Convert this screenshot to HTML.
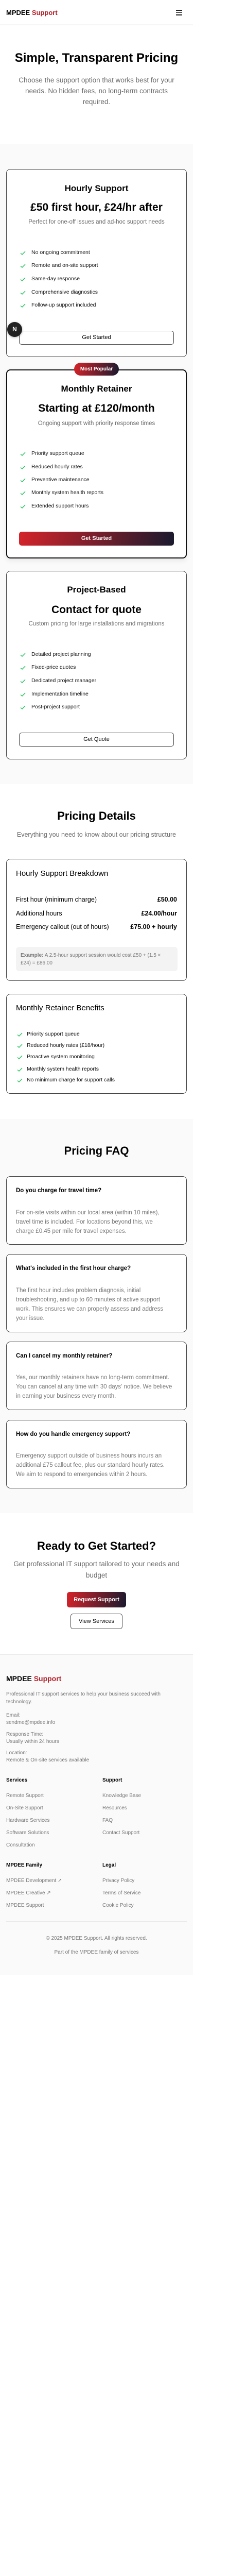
<!DOCTYPE html>
<html style="height:5202px;overflow:hidden"><head><meta charset="utf-8"><style>
*{margin:0;padding:0;box-sizing:border-box}
html,body{width:480px;height:5202px;overflow:hidden}
body{background:#fff;position:relative;font-family:"Liberation Sans",Arial,sans-serif;color:#000}
.a{position:absolute}
.c{position:absolute;left:0;width:375px;text-align:center;white-space:nowrap}
.g{color:#6b6b6b}
.card{position:absolute;left:12px;width:351px;background:#fff;border:1px solid #444;border-radius:8px}
.feat{position:absolute;left:61px;font-size:10.5px;line-height:14px;color:#111;white-space:nowrap}
.ck{position:absolute;left:39px;width:11px;height:8px}
.btn{position:absolute;left:37px;width:301px;height:27px;border:1px solid #444;border-radius:5px;text-align:center;font-size:11px;line-height:25px;background:#fff}
.grad{background:linear-gradient(100deg,#d4232a,#1a1a2e);color:#fff;border:none;font-weight:bold}
.faq{position:absolute;left:12px;width:351px;background:#fff;border:1px solid #444;border-radius:8px}
.q{position:absolute;left:31px;font-size:11.5px;font-weight:bold;white-space:nowrap;line-height:16px}
.ans{position:absolute;left:31px;font-size:11.5px;color:#777;line-height:18px;white-space:nowrap}
.fl{position:absolute;font-size:10px;color:#777;white-space:nowrap;line-height:14px}
.fh{position:absolute;font-size:10px;font-weight:bold;white-space:nowrap;line-height:14px}
</style></head><body>
<svg width="0" height="0" style="position:absolute;left:0;top:0"><defs><symbol id="ck" viewBox="0 0 11 8"><path d="M1 4.5 L4 7 L10 1" fill="none" stroke="#22c55e" stroke-width="1.4"/></symbol></defs></svg>

<div class="a" style="left:12px;top:17px;font-size:13px;font-weight:bold;line-height:16px">MPDEE <span style="color:#b3202a">Support</span></div>
<div class="a" style="left:342px;top:19px;width:12px;height:1.5px;background:#222"></div>
<div class="a" style="left:342px;top:23.5px;width:12px;height:1.5px;background:#222"></div>
<div class="a" style="left:342px;top:28px;width:12px;height:1.5px;background:#222"></div>
<div class="a" style="left:0;top:48px;width:375px;height:1px;background:#555"></div>

<div class="c" style="top:98px;font-size:24px;font-weight:bold;line-height:30px">Simple, Transparent Pricing</div>
<div class="c g" style="top:145px;font-size:13.5px;line-height:21px">Choose the support option that works best for your<br>needs. No hidden fees, no long-term contracts<br>required.</div>

<div class="a" style="left:0;top:280px;width:375px;height:1242px;background:#fafafa"></div>

<div class="card" style="top:328px;height:365px"></div>
<div class="c" style="top:355px;font-size:17px;font-weight:bold;line-height:22px">Hourly Support</div>
<div class="c" style="top:390px;font-size:21px;font-weight:bold;line-height:26px">£50 first hour, £24/hr after</div>
<div class="c g" style="top:423px;font-size:11.5px;line-height:16px">Perfect for one-off issues and ad-hoc support needs</div>
<svg class="ck" style="top:487px"><use href="#ck"/></svg><div class="feat" style="top:483px">No ongoing commitment</div>
<svg class="ck" style="top:512px"><use href="#ck"/></svg><div class="feat" style="top:508px">Remote and on-site support</div>
<svg class="ck" style="top:538px"><use href="#ck"/></svg><div class="feat" style="top:534px">Same-day response</div>
<svg class="ck" style="top:564px"><use href="#ck"/></svg><div class="feat" style="top:560px">Comprehensive diagnostics</div>
<svg class="ck" style="top:589px"><use href="#ck"/></svg><div class="feat" style="top:585px">Follow-up support included</div>
<div class="btn" style="top:642px">Get Started</div>
<div class="a" style="left:14px;top:625px;width:29px;height:29px;border-radius:50%;background:#222;box-shadow:0 1px 4px rgba(0,0,0,.3);color:#fff;font-size:12px;font-weight:bold;text-align:center;line-height:29px">N</div>

<div class="card" style="top:717px;height:367px;border:2px solid #111;box-shadow:0 4px 10px rgba(0,0,0,.08)"></div>
<div class="a" style="left:144px;top:704px;width:87px;height:25px;border-radius:13px;background:linear-gradient(100deg,#d4232a,#1a1a2e);color:#fff;font-size:10px;font-weight:bold;text-align:center;line-height:25px">Most Popular</div>
<div class="c" style="top:744px;font-size:17px;font-weight:bold;line-height:22px">Monthly Retainer</div>
<div class="c" style="top:780px;font-size:21px;font-weight:bold;line-height:26px">Starting at £120/month</div>
<div class="c g" style="top:814px;font-size:11.5px;line-height:16px">Ongoing support with priority response times</div>
<svg class="ck" style="top:877px"><use href="#ck"/></svg><div class="feat" style="top:873px">Priority support queue</div>
<svg class="ck" style="top:903px"><use href="#ck"/></svg><div class="feat" style="top:899px">Reduced hourly rates</div>
<svg class="ck" style="top:928px"><use href="#ck"/></svg><div class="feat" style="top:924px">Preventive maintenance</div>
<svg class="ck" style="top:953px"><use href="#ck"/></svg><div class="feat" style="top:949px">Monthly system health reports</div>
<svg class="ck" style="top:979px"><use href="#ck"/></svg><div class="feat" style="top:975px">Extended support hours</div>
<div class="btn grad" style="top:1032px;line-height:27px">Get Started</div>

<div class="card" style="top:1108px;height:366px"></div>
<div class="c" style="top:1134px;font-size:17px;font-weight:bold;line-height:22px">Project-Based</div>
<div class="c" style="top:1171px;font-size:21px;font-weight:bold;line-height:26px">Contact for quote</div>
<div class="c g" style="top:1203px;font-size:11.5px;line-height:16px">Custom pricing for large installations and migrations</div>
<svg class="ck" style="top:1267px"><use href="#ck"/></svg><div class="feat" style="top:1263px">Detailed project planning</div>
<svg class="ck" style="top:1292px"><use href="#ck"/></svg><div class="feat" style="top:1288px">Fixed-price quotes</div>
<svg class="ck" style="top:1318px"><use href="#ck"/></svg><div class="feat" style="top:1314px">Dedicated project manager</div>
<svg class="ck" style="top:1344px"><use href="#ck"/></svg><div class="feat" style="top:1340px">Implementation timeline</div>
<svg class="ck" style="top:1369px"><use href="#ck"/></svg><div class="feat" style="top:1365px">Post-project support</div>
<div class="btn" style="top:1422px">Get Quote</div>

<div class="c" style="top:1570px;font-size:22px;font-weight:bold;line-height:28px">Pricing Details</div>
<div class="c g" style="top:1611px;font-size:12.5px;line-height:18px">Everything you need to know about our pricing structure</div>

<div class="card" style="top:1667px;height:237px"></div>
<div class="a" style="left:31px;top:1686px;font-size:15px;line-height:20px">Hourly Support Breakdown</div>
<div class="a" style="left:31px;top:1737px;font-size:12.5px;line-height:18px">First hour (minimum charge)</div>
<div class="a" style="right:136px;top:1737px;font-size:12.5px;font-weight:bold;line-height:18px;text-align:right">£50.00</div>
<div class="a" style="left:31px;top:1764px;font-size:12.5px;line-height:18px">Additional hours</div>
<div class="a" style="right:136px;top:1764px;font-size:12.5px;font-weight:bold;line-height:18px">£24.00/hour</div>
<div class="a" style="left:31px;top:1790px;font-size:12.5px;line-height:18px">Emergency callout (out of hours)</div>
<div class="a" style="right:136px;top:1790px;font-size:12.5px;font-weight:bold;line-height:18px">£75.00 + hourly</div>
<div class="a" style="left:31px;top:1838px;width:314px;height:47px;background:#f3f3f3;border-radius:6px"></div>
<div class="a" style="left:40px;top:1847px;font-size:10px;line-height:15px;color:#777;white-space:nowrap"><b>Example:</b> A 2.5-hour support session would cost £50 + (1.5 ×<br>£24) = £86.00</div>

<div class="card" style="top:1929px;height:194px"></div>
<div class="a" style="left:31px;top:1947px;font-size:15px;line-height:20px">Monthly Retainer Benefits</div>
<svg class="ck" style="left:33px;top:2004px"><use href="#ck"/></svg><div class="feat" style="left:52px;top:2000px">Priority support queue</div>
<svg class="ck" style="left:33px;top:2026px"><use href="#ck"/></svg><div class="feat" style="left:52px;top:2022px">Reduced hourly rates (£18/hour)</div>
<svg class="ck" style="left:33px;top:2048px"><use href="#ck"/></svg><div class="feat" style="left:52px;top:2044px">Proactive system monitoring</div>
<svg class="ck" style="left:33px;top:2072px"><use href="#ck"/></svg><div class="feat" style="left:52px;top:2068px">Monthly system health reports</div>
<svg class="ck" style="left:33px;top:2093px"><use href="#ck"/></svg><div class="feat" style="left:52px;top:2089px">No minimum charge for support calls</div>

<div class="a" style="left:0;top:2172px;width:375px;height:765px;background:#fafafa"></div>
<div class="c" style="top:2220px;font-size:22px;font-weight:bold;line-height:28px">Pricing FAQ</div>

<div class="faq" style="top:2283px;height:133px"></div>
<div class="q" style="top:2303px">Do you charge for travel time?</div>
<div class="ans" style="top:2345px">For on-site visits within our local area (within 10 miles),<br>travel time is included. For locations beyond this, we<br>charge £0.45 per mile for travel expenses.</div>

<div class="faq" style="top:2434px;height:152px"></div>
<div class="q" style="top:2454px">What's included in the first hour charge?</div>
<div class="ans" style="top:2496px">The first hour includes problem diagnosis, initial<br>troubleshooting, and up to 60 minutes of active support<br>work. This ensures we can properly assess and address<br>your issue.</div>

<div class="faq" style="top:2604px;height:133px"></div>
<div class="q" style="top:2624px">Can I cancel my monthly retainer?</div>
<div class="ans" style="top:2665px">Yes, our monthly retainers have no long-term commitment.<br>You can cancel at any time with 30 days' notice. We believe<br>in earning your business every month.</div>

<div class="faq" style="top:2756px;height:133px"></div>
<div class="q" style="top:2776px">How do you handle emergency support?</div>
<div class="ans" style="top:2817px">Emergency support outside of business hours incurs an<br>additional £75 callout fee, plus our standard hourly rates.<br>We aim to respond to emergencies within 2 hours.</div>

<div class="c" style="top:2987px;font-size:22px;font-weight:bold;line-height:28px">Ready to Get Started?</div>
<div class="c g" style="top:3025px;font-size:13.5px;line-height:22px">Get professional IT support tailored to your needs and<br>budget</div>
<div class="a" style="left:130px;top:3090px;width:115px;height:30px;border-radius:5px;background:linear-gradient(100deg,#d4232a,#1a1a2e);color:#fff;font-size:11px;font-weight:bold;text-align:center;line-height:30px">Request Support</div>
<div class="a" style="left:137px;top:3132px;width:101px;height:30px;border-radius:5px;border:1px solid #444;font-size:11px;text-align:center;line-height:28px">View Services</div>

<div class="a" style="left:0;top:3210px;width:375px;height:623px;background:#fafafa;border-top:1px solid #888"></div>
<div class="a" style="left:12px;top:3249px;font-size:14px;font-weight:bold;line-height:18px">MPDEE <span style="color:#b3202a">Support</span></div>
<div class="fl" style="left:12px;top:3281px;line-height:15px">Professional IT support services to help your business succeed with<br>technology.</div>
<div class="fl" style="left:12px;top:3323px">Email:<br>sendme@mpdee.info</div>
<div class="fl" style="left:12px;top:3360px">Response Time:<br>Usually within 24 hours</div>
<div class="fl" style="left:12px;top:3396px">Location:<br>Remote &amp; On-site services available</div>
<div class="fh" style="left:12px;top:3449px">Services</div>
<div class="fh" style="left:199px;top:3449px">Support</div>
<div class="fl" style="left:12px;top:3479px">Remote Support</div>
<div class="fl" style="left:12px;top:3503px">On-Site Support</div>
<div class="fl" style="left:12px;top:3527px">Hardware Services</div>
<div class="fl" style="left:12px;top:3551px">Software Solutions</div>
<div class="fl" style="left:12px;top:3575px">Consultation</div>
<div class="fl" style="left:199px;top:3479px">Knowledge Base</div>
<div class="fl" style="left:199px;top:3503px">Resources</div>
<div class="fl" style="left:199px;top:3527px">FAQ</div>
<div class="fl" style="left:199px;top:3551px">Contact Support</div>
<div class="fh" style="left:12px;top:3614px">MPDEE Family</div>
<div class="fh" style="left:199px;top:3614px">Legal</div>
<div class="fl" style="left:12px;top:3644px">MPDEE Development ↗</div>
<div class="fl" style="left:12px;top:3668px">MPDEE Creative ↗</div>
<div class="fl" style="left:12px;top:3692px">MPDEE Support</div>
<div class="fl" style="left:199px;top:3644px">Privacy Policy</div>
<div class="fl" style="left:199px;top:3668px">Terms of Service</div>
<div class="fl" style="left:199px;top:3692px">Cookie Policy</div>
<div class="a" style="left:12px;top:3730px;width:351px;height:1px;background:#777"></div>
<div class="fl" style="left:0;top:3756px;width:375px;text-align:center">© 2025 MPDEE Support. All rights reserved.</div>
<div class="fl" style="left:0;top:3783px;width:375px;text-align:center">Part of the MPDEE family of services</div>
</body></html>
